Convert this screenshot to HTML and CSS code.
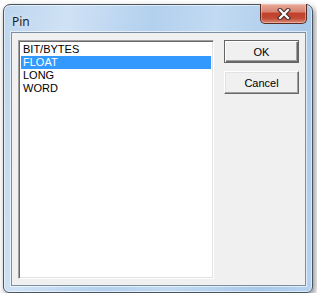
FILE: index.html
```html
<!DOCTYPE html>
<html>
  <head>
    <meta charset="utf-8"/>
    <title>Pin</title>
    <link rel="stylesheet" href="styles.css">
  </head>
  <body>
    <div class="window">
      <div class="titlebar">
        <span class="title">Pin</span>
        <div class="close">
          <svg width="14" height="12" viewBox="0 0 14 12">
            <path d="M3 2 L11 10 M11 2 L3 10" stroke="#3c2a28" stroke-width="4.2" stroke-linecap="square"/>
            <path d="M3 2 L11 10 M11 2 L3 10" stroke="#ffffff" stroke-width="2.2" stroke-linecap="square"/>
          </svg>
        </div>
      </div>
      <div class="client">
        <div class="listbox">
          <div class="item">BIT/BYTES</div>
          <div class="item selected">FLOAT</div>
          <div class="item">LONG</div>
          <div class="item">WORD</div>
        </div>
        <div class="buttons">
          <button class="btn default">OK</button>
          <button class="btn">Cancel</button>
        </div>
      </div>
    </div>
  </body>
</html>
```

FILE: styles.css
```css
body{
  margin: 0;
  background: #ffffff;
  font-family: "Liberation Sans", Arial, sans-serif;
}
.window{
  margin: 4px 0 0 3px;
  width: 295px;
  height: 281px;
  border: 1px solid #4b5560;
  border-radius: 7px 7px 6px 6px;
  background: linear-gradient(100deg, #bcd5ee 0%, #cfe2f5 18%, #b3d0ee 42%, #c2daf2 60%, #a9c9ea 85%, #b6d3f1 100%);
  box-shadow: inset 0 0 0 1px rgba(255,255,255,0.55), 2px 3px 6px rgba(0,0,0,0.45);
  display: flex;
  flex-direction: column;
  padding: 0 6px 6px 7px;
}
.titlebar{
  height: 27px;
  display: flex;
  align-items: flex-start;
  justify-content: space-between;
}
.title{
  font-family: "Noto Sans", "Open Sans", sans-serif;
  font-size: 12px;
  color: #1c1c1c;
  margin-top: 8px;
  margin-left: 1px;
  text-shadow: 0 0 6px rgba(255,255,255,0.9);
}
.close{
  width: 45px;
  height: 19px;
  margin-top: -1px;
  margin-right: -1px;
  border: 1px solid #5c2a22;
  border-top: none;
  border-radius: 0 0 5px 5px;
  background: linear-gradient(#e9a99a 0%, #d88672 40%, #c1412c 50%, #c24a34 75%, #d98a78 100%);
  box-shadow: inset 0 0 0 1px rgba(255,220,210,0.45);
  display: flex;
  align-items: center;
  justify-content: center;
}
.client{
  flex: 1;
  border: 1px solid #7c8ea2;
  background: #f0f0f0;
  box-shadow: 0 0 0 1px rgba(255,255,255,0.6);
  display: flex;
  padding: 7px 6px 6px 6px;
  gap: 10px;
}
.listbox{
  width: 192px;
  height: 235px;
  background: #ffffff;
  border-top: 1px solid #a0a0a0;
  border-left: 1px solid #a0a0a0;
  border-right: 1px solid #ffffff;
  border-bottom: 1px solid #ffffff;
  box-shadow: inset 1px 1px 0 #696969, inset -1px -1px 0 #e3e3e3;
  padding: 2px 2px 0 2px;
}
.item{
  height: 13px;
  line-height: 13px;
  font-size: 11px;
  padding-left: 2px;
  color: #000000;
}
.selected{
  background: #3399ff;
  color: #ffffff;
}
.buttons{
  display: flex;
  flex-direction: column;
  gap: 8px;
}
.btn{
  width: 75px;
  height: 23px;
  font-family: "Liberation Sans", Arial, sans-serif;
  font-size: 11px;
  color: #000000;
  background: #f0f0f0;
  border-top: 1px solid #ffffff;
  border-left: 1px solid #ffffff;
  border-right: 1px solid #696969;
  border-bottom: 1px solid #696969;
  box-shadow: inset -1px -1px 0 #a0a0a0, inset 1px 1px 0 #e3e3e3;
  padding: 0;
}
.default{
  border: 1px solid #646464;
  box-shadow: inset 1px 1px 0 #ffffff, inset -1px -1px 0 #696969, inset -2px -2px 0 #a0a0a0;
}
```
